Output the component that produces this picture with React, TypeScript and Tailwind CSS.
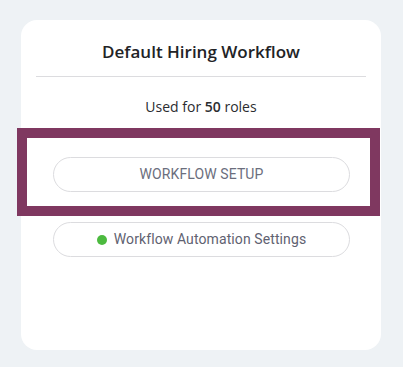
export default function App() {
  return (
    <div className="min-h-[367px] w-[403px] bg-[#eef2f5] pt-[20px] pl-[21px]">
      <div className="flex h-[330px] w-[360px] flex-col rounded-[16px] bg-white">
        {/* Header */}
        <h2 className="pt-[20px] text-center font-['Open_Sans',sans-serif] text-[17px] leading-6 font-semibold text-[#222326]">
          Default Hiring Workflow
        </h2>
        <div className="mx-[15px] mt-3 h-px bg-[#dcdcdf]" />

        <p className="mt-5 text-center font-['Open_Sans',sans-serif] text-[14px] leading-5 text-[#2b2c30]">
          Used for <span className="font-semibold">50</span> roles
        </p>

        {/* Highlighted setup button */}
        <div className="mt-[11px] -ml-[4px] w-[363px] border-[10px] border-[#7f3860] bg-white pt-[19px] pb-[14px] pl-[26px] pr-[20px]">
          <button className="flex h-[35px] w-full items-center justify-center rounded-full border border-[#dcdcdf] font-['Roboto',sans-serif] text-[14px] tracking-[0.1px] text-[#6b6e7d]">
            WORKFLOW SETUP
          </button>
        </div>

        <div className="mt-[6px] px-[32px]">
          <button className="flex h-[35px] w-[297px] items-center justify-center gap-[7px] rounded-full border border-[#dcdcdf] font-['Roboto',sans-serif] text-[14px] tracking-[0.1px] text-[#5f6271]">
            <span className="h-[10px] w-[10px] rounded-full bg-[#4cba3f]" />
            Workflow Automation Settings
          </button>
        </div>
      </div>
    </div>
  )
}
